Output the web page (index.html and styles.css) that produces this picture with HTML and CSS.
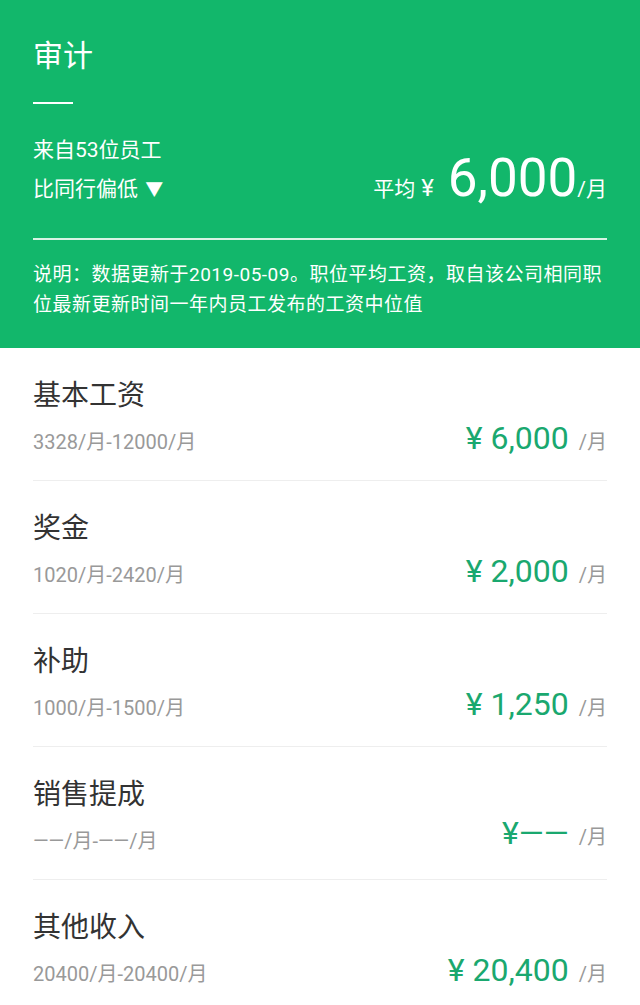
FILE: index.html
```html
<!DOCTYPE html>
<html lang="zh-CN">
<head>
  <meta charset="UTF-8">
  <meta name="viewport" content="width=device-width, initial-scale=1.0">
  <title>审计 工资</title>
  <link rel="stylesheet" href="styles.css">
</head>
<body>
  <!-- 头部汇总 -->
  <header class="summary">
    <h1 class="summary-title">审计</h1>
    <div class="summary-dash"></div>
    <div class="summary-from">来自53位员工</div>
    <div class="summary-row">
      <span class="summary-compare">比同行偏低 <span class="arrow">&#9660;</span></span>
      <span class="summary-avg">
        <span class="avg-label">平均</span>
        <span class="avg-yen">¥</span>
        <span class="avg-num">6,000</span><span class="avg-unit">/月</span>
      </span>
    </div>
    <div class="summary-line"></div>
    <p class="summary-note">说明：数据更新于2019-05-09。职位平均工资，取自该公司相同职位最新更新时间一年内员工发布的工资中位值</p>
  </header>

  <!-- 工资构成 -->
  <ul class="items">
    <li class="item">
      <div class="item-left">
        <div class="item-name">基本工资</div>
        <div class="item-range">3328/月-12000/月</div>
      </div>
      <div class="item-value"><span class="money">¥ 6,000</span><span class="unit">/月</span></div>
    </li>
    <li class="item">
      <div class="item-left">
        <div class="item-name">奖金</div>
        <div class="item-range">1020/月-2420/月</div>
      </div>
      <div class="item-value"><span class="money">¥ 2,000</span><span class="unit">/月</span></div>
    </li>
    <li class="item">
      <div class="item-left">
        <div class="item-name">补助</div>
        <div class="item-range">1000/月-1500/月</div>
      </div>
      <div class="item-value"><span class="money">¥ 1,250</span><span class="unit">/月</span></div>
    </li>
    <li class="item">
      <div class="item-left">
        <div class="item-name">销售提成</div>
        <div class="item-range">——/月-——/月</div>
      </div>
      <div class="item-value empty"><span class="money">¥——</span><span class="unit">/月</span></div>
    </li>
    <li class="item">
      <div class="item-left">
        <div class="item-name">其他收入</div>
        <div class="item-range">20400/月-20400/月</div>
      </div>
      <div class="item-value"><span class="money">¥ 20,400</span><span class="unit">/月</span></div>
    </li>
  </ul>
</body>
</html>
```

FILE: styles.css
```css
body {
  margin: 0;
  font-family: Roboto, "Noto Sans CJK SC", sans-serif;
  background-color: #fff;
  color: #333;
}
.summary {
  background-color: #12b76b;
  color: #fff;
  padding: 36px 33px 28px;
}
.summary-title {
  margin: 0;
  font-size: 30px;
  font-weight: normal;
  line-height: 40px;
}
.summary-dash {
  width: 40px;
  height: 2px;
  background: #fff;
  margin-top: 26px;
}
.summary-from {
  margin-top: 27px;
  font-size: 21px;
  line-height: 38px;
}
.summary-row {
  display: flex;
  justify-content: space-between;
  align-items: baseline;
  height: 38px;
  font-size: 21px;
  line-height: 38px;
}
.arrow {
  font-size: 18px;
  margin-left: 2px;
}
.summary-avg {
  display: flex;
  align-items: baseline;
}
.avg-yen {
  font-size: 24px;
  margin: 0 14px 0 6px;
}
.avg-num {
  font-size: 53px;
  line-height: 16px;
}
.summary-line {
  height: 2px;
  background: #d8f3e4;
  margin-top: 31px;
}
.summary-note {
  margin: 20px 0 0;
  font-size: 19px;
  line-height: 30px;
  letter-spacing: 0.5px;
}
.items {
  list-style: none;
  margin: 0;
  padding: 0 33px;
}
.item {
  display: flex;
  justify-content: space-between;
  align-items: flex-end;
  padding: 30px 0 24px;
  border-bottom: 1px solid #eee;
}
.item-name {
  font-size: 28px;
  line-height: 36px;
}
.item-range {
  margin-top: 14px;
  font-size: 20px;
  line-height: 28px;
  color: #999;
}
.item-value {
  display: flex;
  align-items: baseline;
  line-height: 28px;
}
.money {
  font-size: 32px;
  color: #1aa86f;
}
.unit {
  font-size: 20px;
  color: #999;
  margin-left: 10px;
}
.item-value.empty {
  margin-bottom: 4px;
}
```
